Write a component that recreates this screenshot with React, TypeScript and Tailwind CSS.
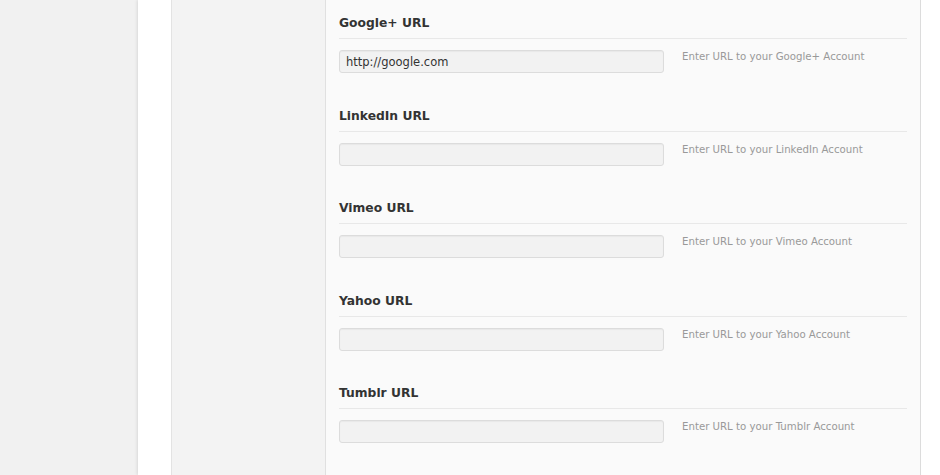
import React from 'react';

const fields = [
  { label: 'Google+ URL', value: 'http://google.com', hint: 'Enter URL to your Google+ Account' },
  { label: 'LinkedIn URL', value: '', hint: 'Enter URL to your LinkedIn Account' },
  { label: 'Vimeo URL', value: '', hint: 'Enter URL to your Vimeo Account' },
  { label: 'Yahoo URL', value: '', hint: 'Enter URL to your Yahoo Account' },
  { label: 'Tumblr URL', value: '', hint: 'Enter URL to your Tumblr Account' },
];

const App: React.FC = () => {
  return (
    <div className="flex h-[475px] w-[940px] overflow-hidden bg-[#f1f1f1] font-['DejaVu_Sans',sans-serif]">
      {/* admin background */}
      <div className="w-[138px] shrink-0 bg-[#f1f1f1]" />

      {/* options frame */}
      <div className="flex flex-1 bg-white shadow-[-1px_0_3px_rgba(0,0,0,0.1)]">
        <div className="w-[34px] shrink-0 border-r border-[#e3e3e3] bg-white" />

        {/* tab sidebar */}
        <div className="w-[154px] shrink-0 border-r border-[#e0e0e0] bg-[#f3f3f3]" />

        {/* fields */}
        <div className="flex-1 border-r border-[#dcdcdc] bg-[#fafafa] px-[13px] pt-[15px]">
          {fields.map((f, i) => (
            <div key={f.label} className={i % 2 === 0 ? 'pb-[35px]' : 'pb-[34px]'}>
              <div className="border-b border-[#e8e8e8] pb-[7px] text-[12.3px] font-bold leading-4 text-[#333]">
                {f.label}
              </div>
              <div className="mt-[11px] flex items-start">
                <input
                  type="text"
                  defaultValue={f.value}
                  className="h-[23px] w-[325px] rounded-[3px] border border-[#dcdcdc] bg-[#f2f2f2] px-[6px] text-[11.5px] text-[#333] shadow-[inset_0_1px_1px_rgba(0,0,0,0.04)] outline-none"
                />
                <span className="ml-[18px] text-[10.2px] leading-[14px] text-[#999]">{f.hint}</span>
              </div>
            </div>
          ))}
        </div>

        <div className="w-[19px] shrink-0 bg-white" />
      </div>
    </div>
  );
};

export default App;
